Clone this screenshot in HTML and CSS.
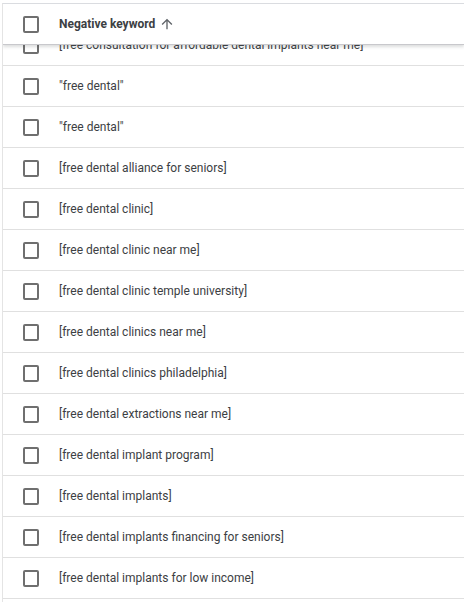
FILE: index.html
```html
<!DOCTYPE html>
<html lang="en">
<head>
  <meta charset="UTF-8">
  <meta name="viewport" content="width=device-width, initial-scale=1.0">
  <title>Negative keywords</title>
  <link rel="stylesheet" href="styles.css">
</head>
<body>
  <div class="table">
    <div class="table-header">
      <span class="checkbox"></span>
      <span class="header-label">Negative keyword</span>
      <svg class="sort-icon" viewBox="0 0 24 24" width="16" height="16">
        <path d="M4 12l1.41 1.41L11 7.83V20h2V7.83l5.58 5.59L20 12l-8-8-8 8z"></path>
      </svg>
    </div>
    <div class="table-body">
      <div class="row"><span class="checkbox"></span><span class="keyword">[free consultation for affordable dental implants near me]</span></div>
      <div class="row"><span class="checkbox"></span><span class="keyword">"free dental"</span></div>
      <div class="row"><span class="checkbox"></span><span class="keyword">"free dental"</span></div>
      <div class="row"><span class="checkbox"></span><span class="keyword">[free dental alliance for seniors]</span></div>
      <div class="row"><span class="checkbox"></span><span class="keyword">[free dental clinic]</span></div>
      <div class="row"><span class="checkbox"></span><span class="keyword">[free dental clinic near me]</span></div>
      <div class="row"><span class="checkbox"></span><span class="keyword">[free dental clinic temple university]</span></div>
      <div class="row"><span class="checkbox"></span><span class="keyword">[free dental clinics near me]</span></div>
      <div class="row"><span class="checkbox"></span><span class="keyword">[free dental clinics philadelphia]</span></div>
      <div class="row"><span class="checkbox"></span><span class="keyword">[free dental extractions near me]</span></div>
      <div class="row"><span class="checkbox"></span><span class="keyword">[free dental implant program]</span></div>
      <div class="row"><span class="checkbox"></span><span class="keyword">[free dental implants]</span></div>
      <div class="row"><span class="checkbox"></span><span class="keyword">[free dental implants financing for seniors]</span></div>
      <div class="row"><span class="checkbox"></span><span class="keyword">[free dental implants for low income]</span></div>
    </div>
  </div>
</body>
</html>
```

FILE: styles.css
```css
body {
  margin: 0;
  background-color: #ffffff;
  font-family: Roboto, "Liberation Sans", Arial, sans-serif;
  color: #3c4043;
  overflow: hidden;
}

.table {
  margin: 3px 0 0 2px;
  border-top: 1px solid #dadce0;
  border-left: 1px solid #e4e4e4;
  height: 600px;
  overflow: hidden;
}

.table-header {
  position: relative;
  z-index: 1;
  display: flex;
  align-items: center;
  height: 40px;
  padding-left: 20px;
  background-color: #ffffff;
  border-bottom: 1px solid #c8c8cc;
  box-shadow: 0 2px 3px rgba(60, 64, 67, 0.18);
}

.header-label {
  font-size: 12px;
  font-weight: 700;
  color: #3c4043;
}

.sort-icon {
  margin-left: 4px;
  fill: #5f6368;
}

.table-body {
  margin-top: -20px;
}

.row {
  display: flex;
  align-items: center;
  height: 40px;
  padding-left: 20px;
  border-bottom: 1px solid #e0e0e0;
}

.checkbox {
  box-sizing: border-box;
  width: 16px;
  height: 17px;
  border: 2px solid #6f6f6f;
  border-radius: 2px;
  margin-right: 20px;
  flex-shrink: 0;
}

.keyword {
  font-size: 12px;
  white-space: nowrap;
}
```
